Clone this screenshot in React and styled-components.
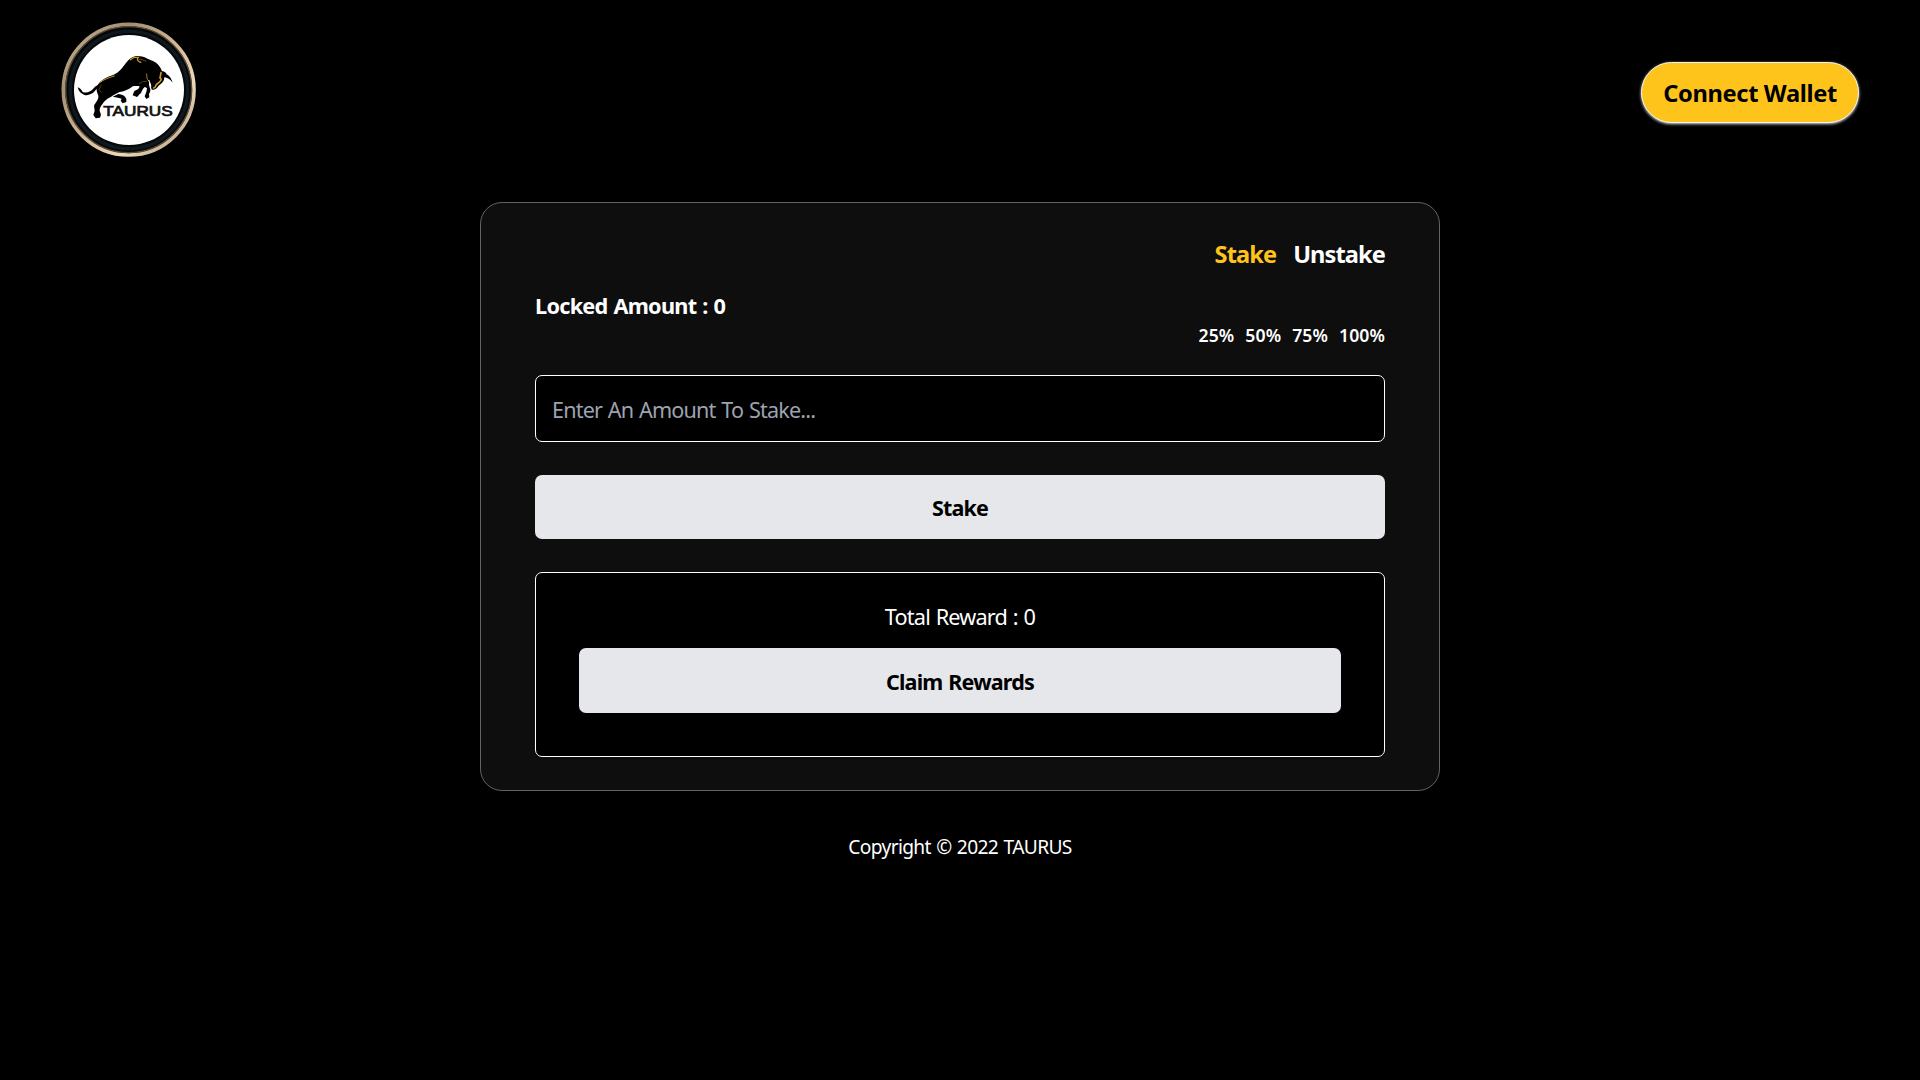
import React, { useState } from "react";
import styled, { createGlobalStyle } from "styled-components";

const GlobalStyle = createGlobalStyle`
  *, *::before, *::after { box-sizing: border-box; }
  body {
    margin: 0;
    min-height: 100vh;
    background: #000;
    color: #fff;
    font-family: "Segoe UI", "Noto Sans", "Open Sans", sans-serif;
  }
  button, input { font-family: inherit; }
`;

const Page = styled.div`
  display: flex;
  flex-direction: column;
  align-items: center;
  min-height: 100vh;
`;

const Header = styled.header`
  display: flex;
  justify-content: space-between;
  align-items: flex-start;
  width: 100%;
  height: 202px;
  padding: 22px 61px 0;
`;

const LogoSvg = styled.svg`
  display: block;
  width: 136px;
  height: 136px;
`;

const WalletButton = styled.button`
  width: 218px;
  height: 61px;
  margin-top: 40px;
  padding: 0;
  border: 1px solid #f3f4f6;
  border-radius: 31px;
  background: #ffc41c;
  color: #000;
  font-size: 23.7px;
  font-weight: 700;
  letter-spacing: -0.36px;
  white-space: nowrap;
  box-shadow: 0 1px 3px rgba(255, 255, 255, 0.9);
`;

const Card = styled.main`
  display: flex;
  flex-direction: column;
  width: 960px;
  height: 589px;
  padding: 36px 54px 33px;
  border: 1px solid #636363;
  border-radius: 22px;
  background: #0e0e0e;
`;

const Tabs = styled.nav`
  display: flex;
  justify-content: flex-end;
  gap: 17px;
  margin-bottom: 22px;
`;

const Tab = styled.button`
  padding: 0;
  border: 0;
  background: none;
  color: ${(p) => (p.$active ? "#ffc41c" : "#fff")};
  font-size: 23.6px;
  font-weight: 700;
  line-height: 30px;
  letter-spacing: -0.9px;
`;

const Locked = styled.div`
  font-size: 21.7px;
  font-weight: 700;
  line-height: 30px;
  letter-spacing: -0.74px;
  word-spacing: 1px;
`;

const Shares = styled.div`
  display: flex;
  justify-content: flex-end;
  gap: 11px;
  margin: 1px 0 27px;
`;

const Share = styled.button`
  padding: 0;
  border: 0;
  background: none;
  color: #fff;
  font-size: 17.6px;
  font-weight: 600;
  line-height: 26px;
  letter-spacing: 0.1px;
`;

const AmountInput = styled.input`
  width: 100%;
  height: 67px;
  margin-bottom: 33px;
  padding: 2px 16px 0;
  border: 1px solid #fff;
  border-radius: 7px;
  outline: none;
  background: #000;
  color: #fff;
  font-size: 21.6px;
  letter-spacing: -0.84px;
  word-spacing: 1px;

  &::placeholder { color: #9ca3af; opacity: 1; }
`;

const ActionButton = styled.button`
  width: 100%;
  height: ${(p) => p.$height}px;
  padding: 1px 0 0;
  border: 0;
  border-radius: 7px;
  background: #e5e7eb;
  color: #000;
  font-size: 21.5px;
  font-weight: 700;
  letter-spacing: -0.8px;
  word-spacing: 1px;
`;

const RewardBox = styled.section`
  display: flex;
  flex-direction: column;
  align-items: center;
  height: 185px;
  margin-top: 33px;
  padding: 29px 43px 0;
  border: 1px solid #fff;
  border-radius: 7px;
  background: #000;
`;

const RewardText = styled.div`
  margin-bottom: 16px;
  font-size: 21.7px;
  line-height: 30px;
  letter-spacing: -0.84px;
  word-spacing: 1px;
`;

const Footer = styled.footer`
  margin-top: 41px;
  font-size: 19.2px;
  line-height: 30px;
  letter-spacing: -0.65px;
  word-spacing: 1px;
`;

function Logo() {
  return (
    <LogoSvg viewBox="33 36 408 408" role="img" aria-label="Taurus">
      <defs>
        <linearGradient id="rim" x1="0" y1="0" x2="1" y2="1">
          <stop offset="0" stopColor="#cbb99c" />
          <stop offset="0.25" stopColor="#a38f72" />
          <stop offset="0.5" stopColor="#cfb894" />
          <stop offset="0.72" stopColor="#eed9bc" />
          <stop offset="1" stopColor="#a5937a" />
        </linearGradient>
      </defs>
      <circle cx="236" cy="239" r="196" fill="#060708" stroke="url(#rim)" strokeWidth="11" />
      <circle cx="236" cy="239" r="189" fill="none" stroke="#5b4c38" strokeWidth="4" />
      <circle cx="237" cy="240" r="176" fill="none" stroke="#10181f" strokeWidth="10" />
      <circle cx="237" cy="240" r="165" fill="#fff" />
      <path d="M83 232 C90 235 94 239 98 246 C110 251 123 245 131 235 C136 228 143 226 149 223 L153 229 C143 233 139 238 134 244 C125 254 111 258 102 254 C93 251 85 243 83 232 Z" />
      <path d="M141 229 C149 213 164 204 181 198 C205 190 214 177 224 164 C234 150 245 140 260 138 C278 136 293 147 309 153 C324 160 332 172 336 184 C347 188 344 199 342 209 C339 218 331 221 326 227 C320 236 313 241 306 239 C302 235 304 223 300 217 C294 222 299 229 301 238 C302 245 299 248 297 252 L298 262 L289 267 L284 259 L289 246 L291 234 L284 231 C278 236 276 243 273 249 C267 252 266 258 261 261 L248 256 L253 243 L265 237 L269 229 C262 227 255 228 248 229 C239 237 225 244 209 246 L198 251 C193 254 187 257 181 262 C170 267 163 274 158 281 C152 289 148 294 149 302 L153 314 L150 323 L137 325 L130 315 L134 303 L132 287 C136 278 147 268 145 257 C141 247 138 241 141 229 Z" />
      <path d="M188 260 L205 252 C216 253 225 257 229 267 L229 276 L218 280 L212 272 L215 266 L204 263 Z" />
      <path d="M341 191 C352 191 362 198 368 218 C360 207 350 202 340 201 Z M337 184 C344 185 347 187 351 194 C346 191 341 192 337 192 Z" />
      <g fill="none" stroke="#cf9826" strokeLinecap="round">
        <path d="M149 218 C163 207 177 203 193 198" strokeWidth="3" />
        <path d="M241 150 L252 142 L265 142 C259 148 262 154 273 157" strokeWidth="3.5" />
        <path d="M266 148 C275 147 281 151 288 154" stroke="#9a7122" strokeWidth="2" />
        <path d="M290 192 C292 202 287 207 299 214" strokeWidth="2.5" />
        <path d="M333 188 L330 204 C338 207 330 216 321 222 C316 225 319 231 311 234" strokeWidth="5" />
        <path d="M268 221 L278 215 L290 214" stroke="#765619" strokeWidth="2" />
        <path d="M154 225 L147 239 L154 247" stroke="#765619" strokeWidth="2" />
      </g>
      <path d="M296 210 L303 229" stroke="#fff" strokeWidth="3" />
      <text
        x="160"
        y="318.5"
        fontFamily='"Liberation Sans", Arial, sans-serif'
        fontSize="43"
        fill="#111"
        stroke="#111"
        strokeWidth="2.2"
        textLength="208"
        lengthAdjust="spacingAndGlyphs"
      >
        TAURUS
      </text>
    </LogoSvg>
  );
}

const TABS = ["Stake", "Unstake"];
const SHARES = ["25%", "50%", "75%", "100%"];

export default function App() {
  const [tab, setTab] = useState("Stake");
  return (
    <>
      <GlobalStyle />
      <Page>
        <Header>
          <Logo />
          <WalletButton>Connect Wallet</WalletButton>
        </Header>
        <Card>
          <Tabs>
            {TABS.map((name) => (
              <Tab key={name} $active={tab === name} onClick={() => setTab(name)}>
                {name}
              </Tab>
            ))}
          </Tabs>
          <Locked>Locked Amount : 0</Locked>
          <Shares>
            {SHARES.map((share) => (
              <Share key={share}>{share}</Share>
            ))}
          </Shares>
          <AmountInput placeholder={`Enter An Amount To ${tab}...`} />
          <ActionButton $height={64}>{tab}</ActionButton>
          <RewardBox>
            <RewardText>Total Reward : 0</RewardText>
            <ActionButton $height={65}>Claim Rewards</ActionButton>
          </RewardBox>
        </Card>
        <Footer>Copyright © 2022 TAURUS</Footer>
      </Page>
    </>
  );
}
